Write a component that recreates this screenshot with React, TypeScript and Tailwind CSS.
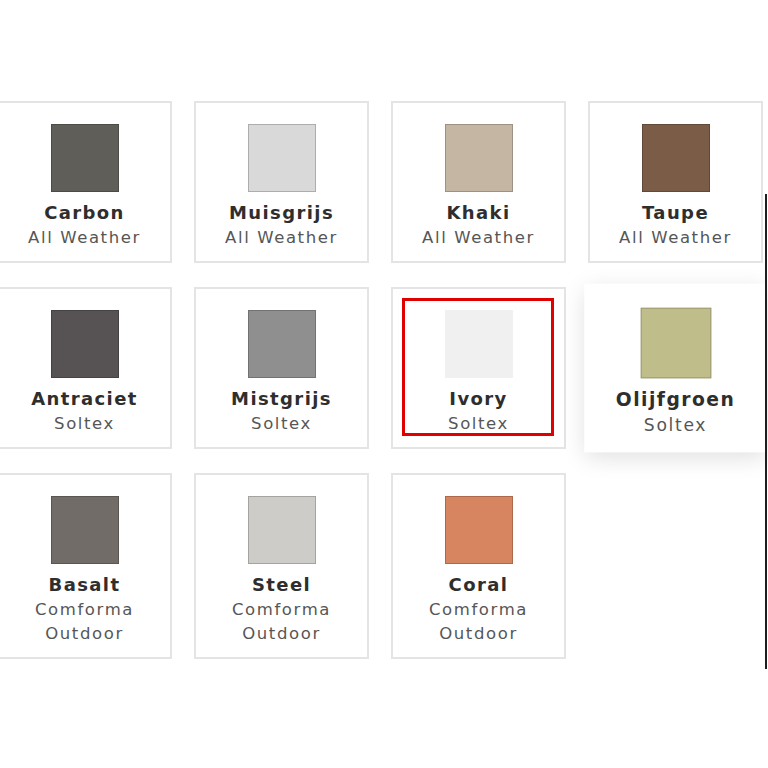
type Swatch = {
  name: string;
  lines: string[];
  color: string;
  active?: boolean;
  marked?: boolean;
};

const swatches: Swatch[] = [
  { name: 'Carbon', lines: ['All Weather'], color: '#5f5e58' },
  { name: 'Muisgrijs', lines: ['All Weather'], color: '#d9d9d9' },
  { name: 'Khaki', lines: ['All Weather'], color: '#c5b6a4' },
  { name: 'Taupe', lines: ['All Weather'], color: '#7a5c47' },
  { name: 'Antraciet', lines: ['Soltex'], color: '#575354' },
  { name: 'Mistgrijs', lines: ['Soltex'], color: '#8f8f8f' },
  { name: 'Ivory', lines: ['Soltex'], color: '#f0f0f0', marked: true },
  { name: 'Olijfgroen', lines: ['Soltex'], color: '#bfbd8a', active: true },
  { name: 'Basalt', lines: ['Comforma', 'Outdoor'], color: '#716c68' },
  { name: 'Steel', lines: ['Comforma', 'Outdoor'], color: '#cdccc8' },
  { name: 'Coral', lines: ['Comforma', 'Outdoor'], color: '#d78460' },
];

const SwatchCard = ({ swatch }: { swatch: Swatch }) => (
  <div
    className={`relative flex flex-col items-center bg-white border-2 pt-[21px] pb-[11px] ${
      swatch.active
        ? 'border-white scale-[1.04] shadow-[0_6px_22px_rgba(0,0,0,0.13)] z-10'
        : 'border-[#e4e4e4]'
    }`}
  >
    <div
      className={`w-[68px] h-[68px] border ${swatch.marked ? 'border-transparent' : 'border-black/20'}`}
      style={{ backgroundColor: swatch.color }}
    />
    <p className="mt-[8px] text-[18px] leading-[26px] font-bold tracking-[1.4px] text-[#2e2e2e]">
      {swatch.name}
    </p>
    {swatch.lines.map((line) => (
      <p key={line} className="text-[16.5px] leading-[24px] tracking-[1.6px] text-[#565656]">
        {line}
      </p>
    ))}

    {/* rode markering rond het geselecteerde staal */}
    {swatch.marked && (
      <div className="absolute left-[9px] top-[9px] right-[10px] bottom-[11px] border-[3px] border-[#e00000]" />
    )}
  </div>
);

export default function App() {
  return (
    <div
      className="relative w-[768px] h-[768px] overflow-hidden bg-white"
      style={{ fontFamily: '"DejaVu Sans", "Noto Sans", sans-serif' }}
    >
      <div className="grid grid-cols-[repeat(4,175px)] items-start gap-x-[22px] gap-y-[24px] -ml-[3px] pt-[101px]">
        {swatches.map((s) => (
          <SwatchCard key={s.name} swatch={s} />
        ))}
      </div>

      {/* rand van het paneel rechts */}
      <div className="absolute left-[765px] top-[194px] w-[2px] h-[475px] bg-[#1e1e1e] z-20" />
    </div>
  );
}
